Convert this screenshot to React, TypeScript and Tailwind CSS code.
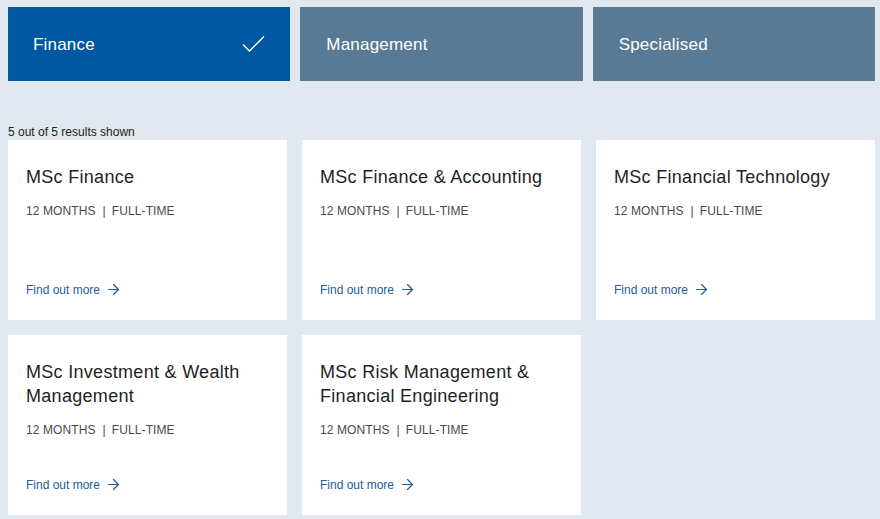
import { ArrowRight } from 'lucide-react';

const tabs = [
  { label: 'Finance', active: true },
  { label: 'Management', active: false },
  { label: 'Specialised', active: false },
];

const courses = [
  'MSc Finance',
  'MSc Finance & Accounting',
  'MSc Financial Technology',
  'MSc Investment & Wealth Management',
  'MSc Risk Management & Financial Engineering',
];

export default function App() {
  return (
    <div
      className="min-h-[519px] bg-[#e1e8f0] pt-[7px] pb-[4px]"
      style={{ fontFamily: '"Liberation Sans", Arial, sans-serif' }}
    >
      <div className="ml-[8px] w-[867px]">
        <div className="grid grid-cols-3 gap-[10px]">
          {tabs.map((t) => (
            <div
              key={t.label}
              className={
                t.active
                  ? 'flex h-[74px] items-center justify-between bg-[#0058a3] pl-[25px] pr-[25px] pt-[2px] text-white'
                  : 'flex h-[74px] items-center justify-between bg-[#587a95] pl-[26px] pr-[25px] pt-[2px] text-white'
              }
            >
              <span className="text-[17px] tracking-[0.2px]">{t.label}</span>
              {t.active && (
                <svg width="23" height="18" viewBox="0 0 23 18" fill="none" className="-mt-[2px]">
                  <path d="M1 9.5L7.5 16L22 1.5" stroke="white" strokeWidth="1.4" />
                </svg>
              )}
            </div>
          ))}
        </div>

        <p className="mt-[44px] h-[15px] text-[12px] leading-[14px] text-[#222]">5 out of 5 results shown</p>

        <div className="grid grid-cols-3 gap-[15px]">
          {courses.map((c) => (
            <div key={c} className="flex h-[180px] flex-col bg-white px-[18px] pt-[25px] pb-[22px]">
              <h3 className="text-[18px] leading-[24px] tracking-[0.3px] text-[#1f1f1f]">{c}</h3>
              <div className="mt-[14px] flex text-[12px] leading-[16px] tracking-[0.1px] text-[#4a4a4a]">
                <span>12 MONTHS</span>
                <span className="ml-[7px] mr-[6px]">|</span>
                <span>FULL-TIME</span>
              </div>
              <a href="#" className="mt-auto flex items-center text-[12px] leading-[16px] text-[#1e5c9b]">
                Find out more
                <ArrowRight className="ml-[5px]" size={17} strokeWidth={1.7} />
              </a>
            </div>
          ))}
        </div>
      </div>
    </div>
  );
}
